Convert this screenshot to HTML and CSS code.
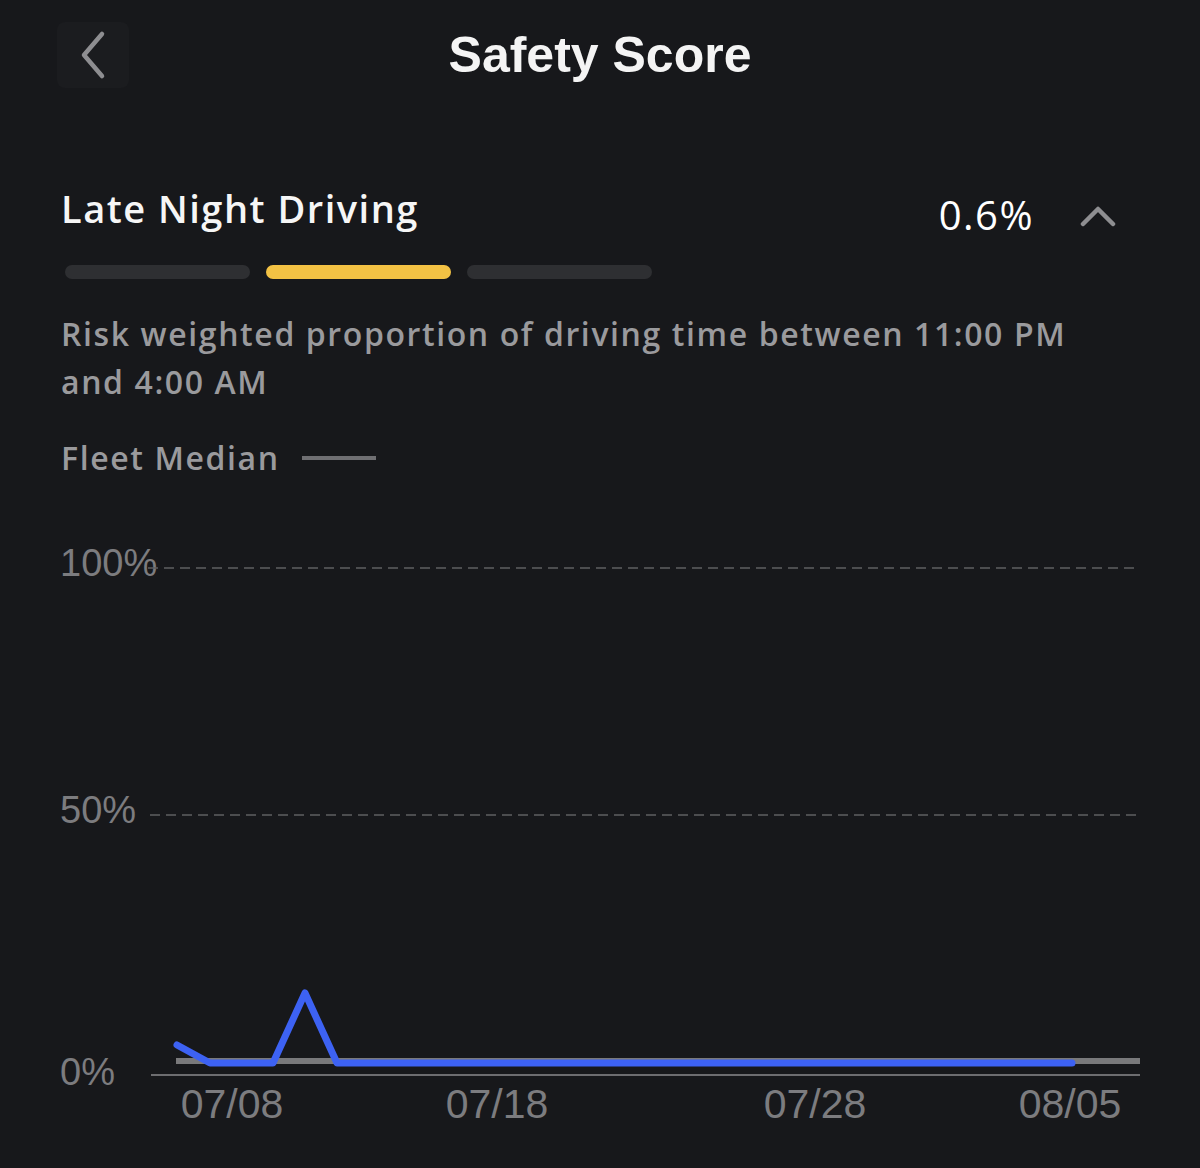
FILE: index.html
```html
<!DOCTYPE html>
<html lang="en">
<head>
    <meta charset="UTF-8">
    <meta name="viewport" content="width=device-width, initial-scale=1.0">
    <title>Safety Score</title>
    <link rel="stylesheet" href="styles.css">
</head>
<body>
    <header class="topbar">
        <button class="back" aria-label="Back">
            <svg width="32" height="50" viewBox="0 0 32 50">
                <polyline points="25,4 7,25 25,46" fill="none" stroke="#8e8e91" stroke-width="4.5" stroke-linecap="round" stroke-linejoin="round"/>
            </svg>
        </button>
        <h1 class="title">Safety Score</h1>
    </header>

    <section class="metric">
        <div class="metric-head">
            <h2>Late Night Driving</h2>
            <div class="metric-value">
                <span>0.6%</span>
                <svg width="36" height="22" viewBox="0 0 36 22">
                    <polyline points="3,19 18,4 33,19" fill="none" stroke="#8e8e91" stroke-width="4.5" stroke-linecap="round" stroke-linejoin="round"/>
                </svg>
            </div>
        </div>

        <div class="levels">
            <span class="level"></span>
            <span class="level active"></span>
            <span class="level"></span>
        </div>

        <p class="desc">Risk weighted proportion of driving time between 11:00 PM and 4:00 AM</p>

        <div class="legend">
            <span>Fleet Median</span>
            <i class="legend-line"></i>
        </div>
    </section>

    <div class="chart">
        <svg width="1200" height="600" viewBox="0 530 1200 600">
            <g class="ylabels">
                <text x="60" y="576">100%</text>
                <text x="60" y="823">50%</text>
                <text x="60" y="1085">0%</text>
            </g>
            <line x1="148" y1="568" x2="1140" y2="568" class="grid"/>
            <line x1="150" y1="815" x2="1140" y2="815" class="grid"/>
            <line x1="151" y1="1075" x2="1140" y2="1075" class="axis"/>
            <line x1="176" y1="1061" x2="1140" y2="1061" class="median"/>
            <polyline class="series" points="177,1045 210,1063 273,1063 305,993 337,1063 1072,1063"/>
            <g class="xlabels">
                <text x="232" y="1118">07/08</text>
                <text x="497" y="1118">07/18</text>
                <text x="815" y="1118">07/28</text>
                <text x="1070" y="1118">08/05</text>
            </g>
        </svg>
    </div>
</body>
</html>
```

FILE: styles.css
```css
body {
    margin: 0;
    background-color: #17181b;
    color: #ffffff;
    font-family: 'Open Sans', 'Liberation Sans', sans-serif;
    overflow: hidden;
}
.topbar {
    position: relative;
    height: 110px;
    display: flex;
    align-items: center;
    justify-content: center;
}
.back {
    position: absolute;
    left: 57px;
    top: 22px;
    width: 72px;
    height: 66px;
    background: #1b1c1f;
    border: none;
    border-radius: 8px;
    display: flex;
    align-items: center;
    justify-content: center;
    padding: 0;
}
.title {
    margin: 0;
    font-family: 'Liberation Sans', Arial, sans-serif;
    font-weight: bold;
    font-size: 50px;
    color: #f4f4f4;
}
.metric {
    padding: 63px 60px 0 61px;
}
.metric-head {
    display: flex;
    justify-content: space-between;
    align-items: center;
}
.metric-head h2 {
    margin: 0;
    font-size: 38px;
    font-weight: 600;
    letter-spacing: 1.5px;
    line-height: 52px;
    color: #f6f6f6;
}
.metric-value {
    display: flex;
    align-items: center;
    gap: 46px;
    margin-top: 14px;
    padding-right: 24px;
    font-size: 40px;
    font-weight: 500;
    letter-spacing: 1.5px;
}
.metric-value svg {
    margin-top: 2px;
}
.levels {
    display: flex;
    gap: 16px;
    margin: 23px 0 0 4px;
}
.level {
    width: 185px;
    height: 14px;
    border-radius: 7px;
    background: #2e2f32;
}
.level.active {
    background: #f3c244;
}
.desc {
    margin: 31px 0 0;
    font-size: 32px;
    font-weight: 600;
    letter-spacing: 1.6px;
    line-height: 48px;
    color: #9a9a9d;
    max-width: 1040px;
}
.legend {
    display: flex;
    align-items: center;
    gap: 22px;
    margin-top: 30px;
    font-size: 32px;
    font-weight: 600;
    letter-spacing: 1.6px;
    color: #9a9a9d;
}
.legend-line {
    width: 74px;
    height: 4px;
    background: #6f6f72;
}
.chart svg {
    display: block;
    margin-top: 51px;
}
.ylabels text, .xlabels text {
    font-family: 'Liberation Sans', Arial, sans-serif;
    font-size: 38px;
    fill: #7c7c7f;
}
.xlabels text {
    font-size: 41px;
    text-anchor: middle;
}
.grid {
    stroke: #5f5f62;
    stroke-width: 1.5;
    stroke-dasharray: 10 6;
}
.axis {
    stroke: #6d6d70;
    stroke-width: 2;
}
.median {
    stroke: #79797b;
    stroke-width: 6;
}
.series {
    fill: none;
    stroke: #3d62f3;
    stroke-width: 7;
    stroke-linecap: round;
    stroke-linejoin: round;
}
```
